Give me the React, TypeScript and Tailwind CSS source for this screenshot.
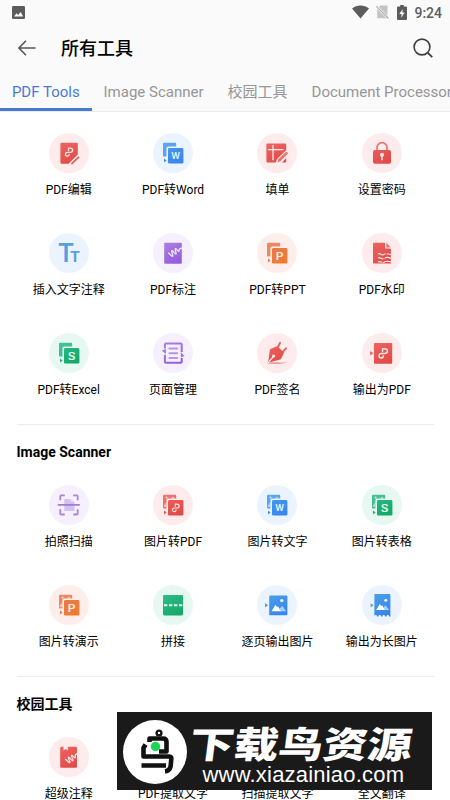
import React from 'react';
import clsx from 'clsx';

type Tone = 'red' | 'blue' | 'orange' | 'purple' | 'green';

interface Tool {
    label: string;
    tone: Tone;
    icon: React.ReactNode;
}

const DISC: Record<Tone, string> = {
    red: 'bg-[#fdeceb]',
    blue: 'bg-[#ebf4fe]',
    orange: 'bg-[#fdeeeb]',
    purple: 'bg-[#f5effe]',
    green: 'bg-[#e6f8f1]',
};

const STOPS: Record<Tone, [string, string]> = {
    red: ['#ef6461', '#df4a47'],
    blue: ['#4a9fe8', '#3785ee'],
    orange: ['#e8794f', '#f07a35'],
    purple: ['#a982dc', '#9659e0'],
    green: ['#2fbd87', '#12a869'],
};

// Shared gradients for every tool icon
const Gradients = () => (
    <svg className="absolute size-0" aria-hidden="true">
        <defs>
            {(Object.keys(STOPS) as Tone[]).map((tone) => (
                <linearGradient key={tone} id={`g-${tone}`} gradientUnits="userSpaceOnUse" x1="12" y1="9" x2="24" y2="31">
                    <stop offset="0" stopColor={STOPS[tone][0]} />
                    <stop offset="1" stopColor={STOPS[tone][1]} />
                </linearGradient>
            ))}
        </defs>
    </svg>
);

// Hooked ribbon used as the PDF mark, drawn around 0,0
const Ribbon = ({ x, y, s = 1 }: { x: number; y: number; s?: number }) => (
    <path
        transform={`translate(${x} ${y}) scale(${s})`}
        d="M-.6-1.4V-4H1.4C4.9-4 4.9.6 1.4.6H-1.6C-4.9.6-4.6 4.8-1.8 4.8-.1 4.8.2 3.6.2 2.8"
        fill="none"
        stroke="#fde4e2"
        strokeWidth="1.4"
        strokeLinecap="round"
        strokeLinejoin="round"
    />
);

interface ConvertProps {
    tone: Tone;
    letter?: string;
    picture?: boolean;
}

const Convert = ({ tone, letter, picture }: ConvertProps) => (
    <>
        <path
            d="M11 9.8H22.2A1 1 0 0 1 23.2 10.8V13.6H15.2A1.8 1.8 0 0 0 13.4 15.4V23.4H10.9A.9.9 0 0 1 10 22.5V10.8A1 1 0 0 1 11 9.8Z"
            fill={`url(#g-${tone})`}
            opacity=".87"
        />
        {picture && (
            <>
                <circle cx="13.6" cy="12.6" r="1.1" fill="#fff" opacity=".65" />
                <path d="M10.8 20.5 13.4 17V22H10.8Z" fill="#fff" opacity=".5" />
                <path d="M18 13.6 20 11.5 22 13.6Z" fill="#fff" opacity=".5" />
            </>
        )}
        <path d="M11 25.6 13.6 27.5 11 29.4Z" fill={`url(#g-${tone})`} />
        <rect x="15" y="15.1" width="15.4" height="15.5" rx="1.4" fill={`url(#g-${tone})`} />
        {letter ? (
            <text
                transform={letter === 'W' ? 'translate(22.7 26.1) scale(.86 .95)' : 'translate(22.7 26.5) scale(1.2 1)'}
                textAnchor="middle"
                className="fill-white/90 font-['Inter'] text-[10px] font-semibold"
            >
                {letter}
            </text>
        ) : (
            <Ribbon x={22.8} y={22.5} s={0.85} />
        )}
    </>
);

const PdfEdit = () => (
    <>
        <path d="M12.6 9.8H27.6A1.2 1.2 0 0 1 28.8 11V22L20.2 30.8H12.6A1.2 1.2 0 0 1 11.4 29.6V11A1.2 1.2 0 0 1 12.6 9.8Z" fill="url(#g-red)" />
        <Ribbon x={20} y={18.8} s={0.9} />
        <path d="M21.2 32 30.8 22.6" stroke="#fdeceb" strokeWidth="4.2" />
        <path d="M22.4 31 30 23.8" stroke="#e5625e" strokeWidth="1.8" />
    </>
);

const FillForm = () => (
    <>
        <rect x="9.4" y="10.5" width="19.8" height="19" rx="1.2" fill="url(#g-red)" />
        <path d="M16 12.4V26.8M11.5 16.6H26" stroke="#fdeceb" strokeWidth="1.3" strokeLinecap="round" />
        <path d="M18.4 30.7 20 26 28.8 17.5 33 20.8 24 30.7Z" fill="#fdeceb" />
        <path d="M20.5 29.4 21.3 26.2 28.6 19.3Q30.5 18.3 31 20.4L23.7 27.9Z" fill="#e77673" />
    </>
);

const Lock = () => (
    <>
        <path d="M15 18V14.6A5 5 0 0 1 25 14.6V18" fill="none" stroke="#eb7370" strokeWidth="1.7" />
        <rect x="11" y="17" width="18" height="13.8" rx="1.8" fill="url(#g-red)" />
        <circle cx="20" cy="21.8" r="2" fill="#fdeceb" />
        <path d="M20 22V26.8" stroke="#fdeceb" strokeWidth="1.4" strokeLinecap="round" />
    </>
);

const TextNote = () => (
    <text x="8.8" y="29.4" className="fill-[#55a0dc] font-['Inter'] text-[25px] font-semibold">
        T
        <tspan x="20.9" className="text-[15px] font-bold">T</tspan>
    </text>
);

const Markup = () => (
    <>
        <rect x="11.2" y="9.7" width="17.6" height="21" rx="1" fill="url(#g-purple)" />
        <path d="M15.6 20C17.2 21.2 18.4 23.6 19.6 23.4 20.8 22.6 17.8 18.4 18.9 17.6 20.2 17 21.6 21.6 23 21 24 20.2 21.2 16.4 22.4 15.6 23.8 15.1 24.6 18.9 25.9 18.3 26.7 17.5 24.8 15.4 28.8 15.2" fill="none" stroke="#f5effe" strokeWidth="1.2" strokeLinecap="round" />
    </>
);

const Watermark = () => (
    <>
        <path d="M12 9.7H22.6L28.9 15.9V30.6H12.1A1 1 0 0 1 11 29.6V10.7A1 1 0 0 1 12 9.7Z" fill="url(#g-red)" />
        <path d="M23 9.5V15.6H29Z" fill="#fdeceb" />
        <path d="M24.4 9.8V14.5H28.8Z" fill="#e87471" />
        <path d="M16 21C18 19.4 19.5 23 21.8 21.5S26 20.5 29 21.7M16 25C18 23.4 19.5 27 21.8 25.5S26 23.8 29 25.4M16 29C18 27.4 19.5 30.7 21.8 29.3S26 27.8 29 28.8" fill="none" stroke="#fdeceb" strokeWidth="1.15" />
        <path d="M24.6 19.6 20 30" stroke="#e25551" strokeWidth="1" />
    </>
);

const Pages = () => (
    <>
        <path d="M11.9 15.6V11.6A1 1 0 0 1 12.9 10.6H27.7A1 1 0 0 1 28.7 11.6V19M11.9 21.8V28.7A1 1 0 0 0 12.9 29.7H27.7A1 1 0 0 0 28.7 28.7V25" fill="none" stroke="url(#g-purple)" strokeWidth="2" />
        <path d="M8.8 17.5 12.9 16V21ZM27.8 19.2V24.6L31.6 23Z" fill="#a07ad6" />
        <path d="M16.4 15.5H24.2M16.4 20.3H24.2M16.4 25H24.2" stroke="#b795e2" strokeWidth="2" strokeLinecap="round" />
    </>
);

const Sign = () => (
    <>
        <path d="M20.6 14.6 23 10M26 18.6 29 15.4" stroke="#e2635f" strokeWidth="2" strokeLinecap="round" />
        <path d="M13 16.2 20 13.2 27.2 19.4 23.8 26.2C19.6 27.6 15.2 28.2 10.6 30.3 12.2 26 12 21 13 16.2Z" fill="url(#g-red)" />
        <path d="M11 30 16 23.9" stroke="#fdeceb" strokeWidth="1.2" />
        <circle cx="16.6" cy="23" r="1.6" fill="#fdeceb" />
        <path d="M10.6 30.2C16 29 23 30 30 29.5C25 31 17 31 10.6 30.2Z" fill="#e87976" />
    </>
);

const ExportPdf = () => (
    <>
        <path d="M8.2 18 11.4 20.2 8.2 22.5Z" fill="#e56562" />
        <rect x="12" y="9.9" width="18.2" height="20.9" rx="1.1" fill="url(#g-red)" />
        <Ribbon x={21.2} y={19.9} s={1.05} />
    </>
);

const Scan = () => (
    <>
        <path d="M15.3 14H21L25.5 17.5V26H15.3Z" fill="#d2c0ef" />
        <path d="M21.6 13.5 25.8 17H21.6Z" fill="#e5dcf7" />
        <path d="M11.3 14.6V11.4Q11.3 10.4 12.3 10.4H15M25 10.4H27.6Q28.7 10.4 28.7 11.4V14.6M11.3 25V28.5Q11.3 29.5 12.3 29.5H15M25 29.5H27.6Q28.7 29.5 28.7 28.5V25" fill="none" stroke="#ad83d4" strokeWidth="1.8" strokeLinecap="round" />
        <path d="M9.4 19.9H30.2" stroke="#a57bd0" strokeWidth="1.6" strokeLinecap="round" />
    </>
);

const Stitch = () => (
    <>
        <rect x="10" y="10" width="20" height="20.4" rx="1.3" fill="url(#g-green)" />
        <path d="M11 20.2H29.5" stroke="#effcf6" strokeWidth="1.9" strokeDasharray="3.3 1.7" />
    </>
);

const ExportImage = () => (
    <>
        <path d="M8 18 11.2 20.2 8 22.5Z" fill="#5a9be3" />
        <rect x="12.2" y="10.6" width="18.2" height="19.6" rx="1" fill="url(#g-blue)" />
        <circle cx="24.8" cy="15.6" r="1.7" fill="#ebf4fe" />
        <path d="M20.5 26.2 25.3 20.7 29 26.2Z" fill="#a7d0f8" />
        <path d="M14.6 26.2 18.4 19.8 20 22 21 21.2 23.8 26.2Z" fill="#fff" />
    </>
);

const ExportLong = () => (
    <>
        <path d="M8.6 18.2 11.6 20.3 8.6 22.6Z" fill="#5a9be3" />
        <path d="M13.2 9H27.6A.8.8 0 0 1 28.4 9.8V31.4H27A1.3 1.3 0 0 0 24.4 31.4H23A1.3 1.3 0 0 0 20.4 31.4H19A1.3 1.3 0 0 0 16.4 31.4H15A1.3 1.3 0 0 0 12.4 31.4V9.8A.8.8 0 0 1 13.2 9Z" fill="url(#g-blue)" />
        <circle cx="23.8" cy="15.2" r="1.5" fill="#ebf4fe" />
        <path d="M19.5 25 23.5 20.2 27.2 25Z" fill="#a7d0f8" />
        <path d="M14.2 25 17.8 19 19.2 21 20.2 20.2 22.7 25Z" fill="#fff" />
    </>
);

const SuperNote = () => (
    <>
        <path d="M12.4 9.7H14.5V13.5L16.7 12 18.8 13.5V9.7H27A1 1 0 0 1 28 10.7V29.7A1 1 0 0 1 27 30.7H12.4A1.2 1.2 0 0 1 11.2 29.5V10.9A1.2 1.2 0 0 1 12.4 9.7Z" fill="url(#g-red)" />
        <path d="M16.4 22.4C18 23 19.4 26 20.8 25.6 21.8 24.6 18.4 21.2 19.4 20.2 20.8 19.6 22.6 24.6 24 23.8 24.8 22.8 21.6 19.4 22.6 18.4 23.8 18 25 21.6 26.2 20.8 26.8 19.8 24.8 17.6 27.8 16.8" fill="none" stroke="#fdeceb" strokeWidth="1.2" strokeLinecap="round" />
    </>
);

const PDF_TOOLS: Tool[] = [
    { label: 'PDF编辑', tone: 'red', icon: <PdfEdit /> },
    { label: 'PDF转Word', tone: 'blue', icon: <Convert tone="blue" letter="W" /> },
    { label: '填单', tone: 'red', icon: <FillForm /> },
    { label: '设置密码', tone: 'red', icon: <Lock /> },
    { label: '插入文字注释', tone: 'blue', icon: <TextNote /> },
    { label: 'PDF标注', tone: 'purple', icon: <Markup /> },
    { label: 'PDF转PPT', tone: 'orange', icon: <Convert tone="orange" letter="P" /> },
    { label: 'PDF水印', tone: 'red', icon: <Watermark /> },
    { label: 'PDF转Excel', tone: 'green', icon: <Convert tone="green" letter="S" /> },
    { label: '页面管理', tone: 'purple', icon: <Pages /> },
    { label: 'PDF签名', tone: 'red', icon: <Sign /> },
    { label: '输出为PDF', tone: 'red', icon: <ExportPdf /> },
];

const IMAGE_TOOLS: Tool[] = [
    { label: '拍照扫描', tone: 'purple', icon: <Scan /> },
    { label: '图片转PDF', tone: 'red', icon: <Convert tone="red" picture /> },
    { label: '图片转文字', tone: 'blue', icon: <Convert tone="blue" letter="W" picture /> },
    { label: '图片转表格', tone: 'green', icon: <Convert tone="green" letter="S" picture /> },
    { label: '图片转演示', tone: 'orange', icon: <Convert tone="orange" letter="P" picture /> },
    { label: '拼接', tone: 'green', icon: <Stitch /> },
    { label: '逐页输出图片', tone: 'blue', icon: <ExportImage /> },
    { label: '输出为长图片', tone: 'blue', icon: <ExportLong /> },
];

const CAMPUS_TOOLS: Tool[] = [
    { label: '超级注释', tone: 'red', icon: <SuperNote /> },
    { label: 'PDF提取文字', tone: 'blue', icon: null },
    { label: '扫描提取文字', tone: 'blue', icon: null },
    { label: '全文翻译', tone: 'blue', icon: null },
];

const ToolGrid = ({ tools }: { tools: Tool[] }) => (
    <div className="grid grid-cols-4 gap-y-[34px]">
        {tools.map((tool) => (
            <div key={tool.label} className="flex h-[66px] flex-col items-center">
                <div className={clsx('size-10 shrink-0 rounded-full', DISC[tool.tone])}>
                    <svg viewBox="0 0 40 40" className="size-10">{tool.icon}</svg>
                </div>
                <span className="mt-[7px] text-[12px] leading-5 whitespace-nowrap text-black">{tool.label}</span>
            </div>
        ))}
    </div>
);

const StatusBar = () => (
    <div className="flex h-6 items-center justify-between pr-2 pl-3 text-[#5c5c5c]">
        <svg viewBox="0 0 13 13" className="size-[13px]">
            <rect width="13" height="13" rx="1.3" fill="currentColor" />
            <path d="M2 10.5 4.6 7.2 6.2 9 8.6 6 11.2 10.5Z" fill="#fafafa" />
        </svg>
        <div className="flex items-center">
            <svg viewBox="0 0 18 14" className="mr-[7px] h-[14px] w-[17px]">
                <path d="M0 3.3C5-1 13-1 18 3.3L9 14Z" fill="currentColor" />
            </svg>
            <svg viewBox="0 0 13 14" className="mr-2 h-[14px] w-[13px]">
                <path d="M4.4.5H11.5V13.3H1.2V4Z" fill="#c4c4c4" />
                <path d="M.3 1.3 12.5 13.5" stroke="#fafafa" strokeWidth="2.6" />
                <path d="M.3 1.3 12.5 13.5" stroke="#a9a9a9" strokeWidth="1.1" />
            </svg>
            <svg viewBox="0 0 10 15" className="mr-[7px] h-[15px] w-[10px]">
                <path d="M3.2 0H6.8V1.5H9Q10 1.5 10 2.5V14Q10 15 9 15H1Q0 15 0 14V2.5Q0 1.5 1 1.5H3.2Z" fill="currentColor" />
                <path d="M5.7 4 2.3 9H4.6L4.2 12.8 7.6 7.6H5.3Z" fill="#fafafa" />
            </svg>
            <span className="pt-px text-[14px] leading-6 font-medium">9:24</span>
        </div>
    </div>
);

const Header = () => (
    <header className="flex h-12 items-center">
        <svg viewBox="0 0 18 16" className="ml-[18px] h-4 w-[18px]" fill="none" stroke="#555" strokeWidth="1.6">
            <path d="M8 .8.9 8 8 15.2M1 8H17.6" />
        </svg>
        <h1 className="ml-[25px] pt-px text-[18px] leading-6 font-medium text-black">所有工具</h1>
        <svg viewBox="0 0 20 20" className="mr-[17.5px] ml-auto size-5" fill="none" stroke="#404040" strokeWidth="1.6">
            <circle cx="9" cy="9" r="7.9" />
            <path d="M14.6 14.6 19.2 19.2" strokeWidth="1.9" />
        </svg>
    </header>
);

const Tabs = () => (
    <nav className="flex h-[39px] overflow-hidden text-[15px] leading-10 whitespace-nowrap text-[#969696]">
        <span className="w-[91.5px] shrink-0 border-b-[3px] border-[#477ad2] text-center text-[#477ad2]">PDF Tools</span>
        <span className="ml-3 shrink-0">Image Scanner</span>
        <span className="ml-6 shrink-0">校园工具</span>
        <span className="ml-6 shrink-0">Document Processor</span>
    </nav>
);

const Banner = () => (
    <div className="absolute top-[712px] left-[117px] flex h-[78px] w-[315px] items-center bg-[#1a1a1a] text-white">
        <svg viewBox="0 0 64 64" className="mt-[2px] ml-[5.5px] size-[64px] shrink-0">
            <circle cx="32" cy="32" r="32" fill="#fff" />
            <g fill="none" stroke="#111" strokeWidth="4.6" strokeLinejoin="round">
                <circle cx="36" cy="13" r="2.4" strokeWidth="2.4" />
                <path d="M26.5 22V18.5H40Q43.5 18.5 43.5 22V31.5H36M22.5 24.5 20.5 28V36.5H46.5Q48.5 36.5 48.3 39L47.6 46.5Q46.5 51 42 51.5M18.5 45.5H43" />
            </g>
            <circle cx="32.5" cy="26.5" r="4.7" fill="#18d653" />
        </svg>
        <div className="mt-2 ml-[3px] flex flex-col">
            <span className="-skew-x-6 scale-y-[.82] font-['Noto_Sans_CJK_SC',sans-serif] text-[44.5px] leading-[38px] font-black whitespace-nowrap">下载鸟资源</span>
            <span className="mt-px ml-[13px] font-['Liberation_Sans',sans-serif] text-[22px] leading-[25px] tracking-[.2px]">www.xiazainiao.com</span>
        </div>
    </div>
);

export default function App() {
    return (
        <div className="relative h-[800px] w-[450px] overflow-hidden bg-white font-['Roboto','Noto_Sans_CJK_SC',sans-serif]">
            <Gradients />
            <div className="h-[112px] border-b border-[#ececec] bg-[#fafafa]">
                <StatusBar />
                <Header />
                <Tabs />
            </div>
            <main className="pt-[20.5px] pr-[16px] pl-[16.5px]">
                <ToolGrid tools={PDF_TOOLS} />
                <section className="mt-[25px] border-t border-[#ececec] pt-[17px]">
                    <h2 className="mb-[23.5px] text-[14px] leading-5 font-bold text-black">Image Scanner</h2>
                    <ToolGrid tools={IMAGE_TOOLS} />
                </section>
                <section className="mt-[25px] border-t border-[#ececec] pt-[17px]">
                    <h2 className="mb-[22.5px] text-[14px] leading-5 font-bold text-black">校园工具</h2>
                    <ToolGrid tools={CAMPUS_TOOLS} />
                </section>
            </main>
            <Banner />
        </div>
    );
}
